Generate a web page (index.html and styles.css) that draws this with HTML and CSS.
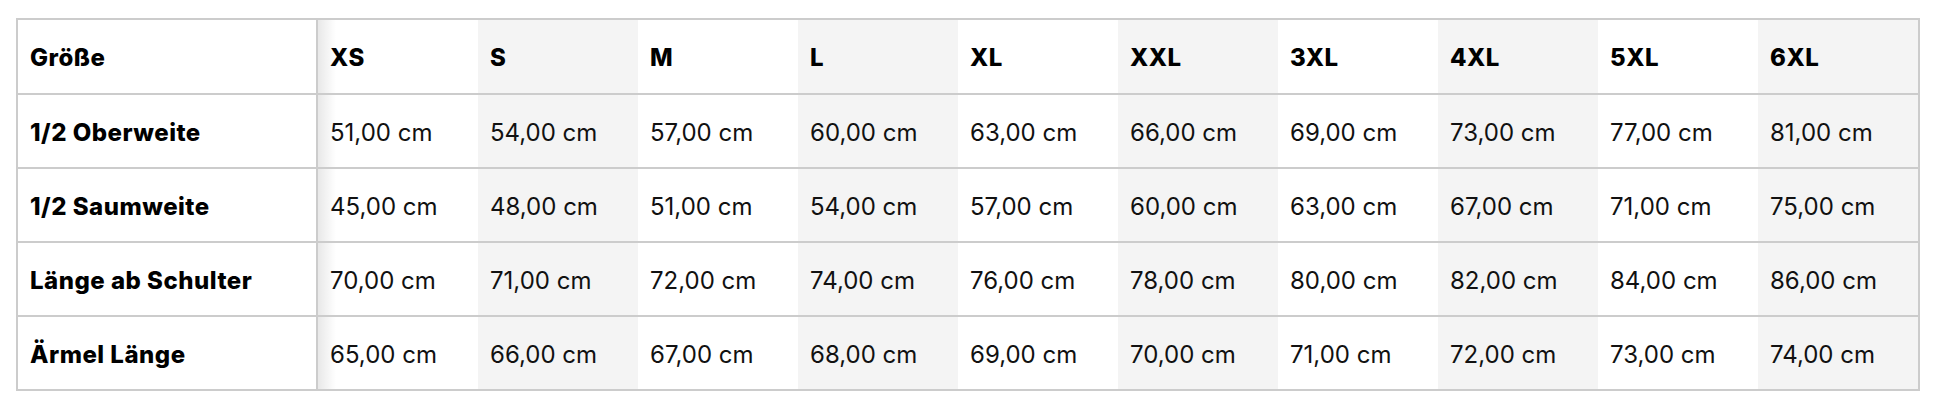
FILE: index.html
```html
<!DOCTYPE html>
<html lang="de">
<head>
<meta charset="utf-8">
<title>Größentabelle</title>
<link rel="stylesheet" href="styles.css">
</head>
<body>
<div class="wrap">
<table class="sizes">
  <thead>
    <tr>
      <th class="label">Größe</th>
      <th>XS</th><th>S</th><th>M</th><th>L</th><th>XL</th><th>XXL</th><th>3XL</th><th>4XL</th><th>5XL</th><th>6XL</th>
    </tr>
  </thead>
  <tbody>
    <tr>
      <th class="label">1/2 Oberweite</th>
      <td>51,00 cm</td><td>54,00 cm</td><td>57,00 cm</td><td>60,00 cm</td><td>63,00 cm</td><td>66,00 cm</td><td>69,00 cm</td><td>73,00 cm</td><td>77,00 cm</td><td>81,00 cm</td>
    </tr>
    <tr>
      <th class="label">1/2 Saumweite</th>
      <td>45,00 cm</td><td>48,00 cm</td><td>51,00 cm</td><td>54,00 cm</td><td>57,00 cm</td><td>60,00 cm</td><td>63,00 cm</td><td>67,00 cm</td><td>71,00 cm</td><td>75,00 cm</td>
    </tr>
    <tr>
      <th class="label">Länge ab Schulter</th>
      <td>70,00 cm</td><td>71,00 cm</td><td>72,00 cm</td><td>74,00 cm</td><td>76,00 cm</td><td>78,00 cm</td><td>80,00 cm</td><td>82,00 cm</td><td>84,00 cm</td><td>86,00 cm</td>
    </tr>
    <tr>
      <th class="label">Ärmel Länge</th>
      <td>65,00 cm</td><td>66,00 cm</td><td>67,00 cm</td><td>68,00 cm</td><td>69,00 cm</td><td>70,00 cm</td><td>71,00 cm</td><td>72,00 cm</td><td>73,00 cm</td><td>74,00 cm</td>
    </tr>
  </tbody>
</table>
</div>
</body>
</html>
```
FILE: styles.css
```css
html, body {
  margin: 0;
  padding: 0;
  background: #ffffff;
}

body {
  margin: 8px;
  font-family: Inter, Roboto, "Liberation Sans", sans-serif;
  color: #000000;
}

.wrap {
  padding: 10px 8px;
}

.sizes {
  border-collapse: separate;
  border-spacing: 0;
  border: 2px solid #cccccc;
  table-layout: fixed;
  font-size: 24px;
  line-height: 1.2;
}

.sizes th,
.sizes td {
  box-sizing: border-box;
  width: 160px;
  height: 74px;
  padding: 4px 12px 0;
  text-align: left;
  vertical-align: middle;
  white-space: nowrap;
  border-top: 2px solid #cccccc;
  background: #ffffff;
}

.sizes th {
  font-weight: 800;
  letter-spacing: 0.5px;
}

.sizes td {
  font-weight: 400;
  color: #111111;
}

.sizes thead th {
  border-top: 0;
  height: 73px;
}

.sizes .label {
  width: 300px;
  border-right: 2px solid #cccccc;
}

.sizes tr > :nth-child(2n+3) {
  background: #f4f4f4;
}

.sizes tr > :nth-child(2) {
  background: linear-gradient(to right, rgba(0, 0, 0, 0.09), rgba(0, 0, 0, 0) 18px), #ffffff;
}
```
